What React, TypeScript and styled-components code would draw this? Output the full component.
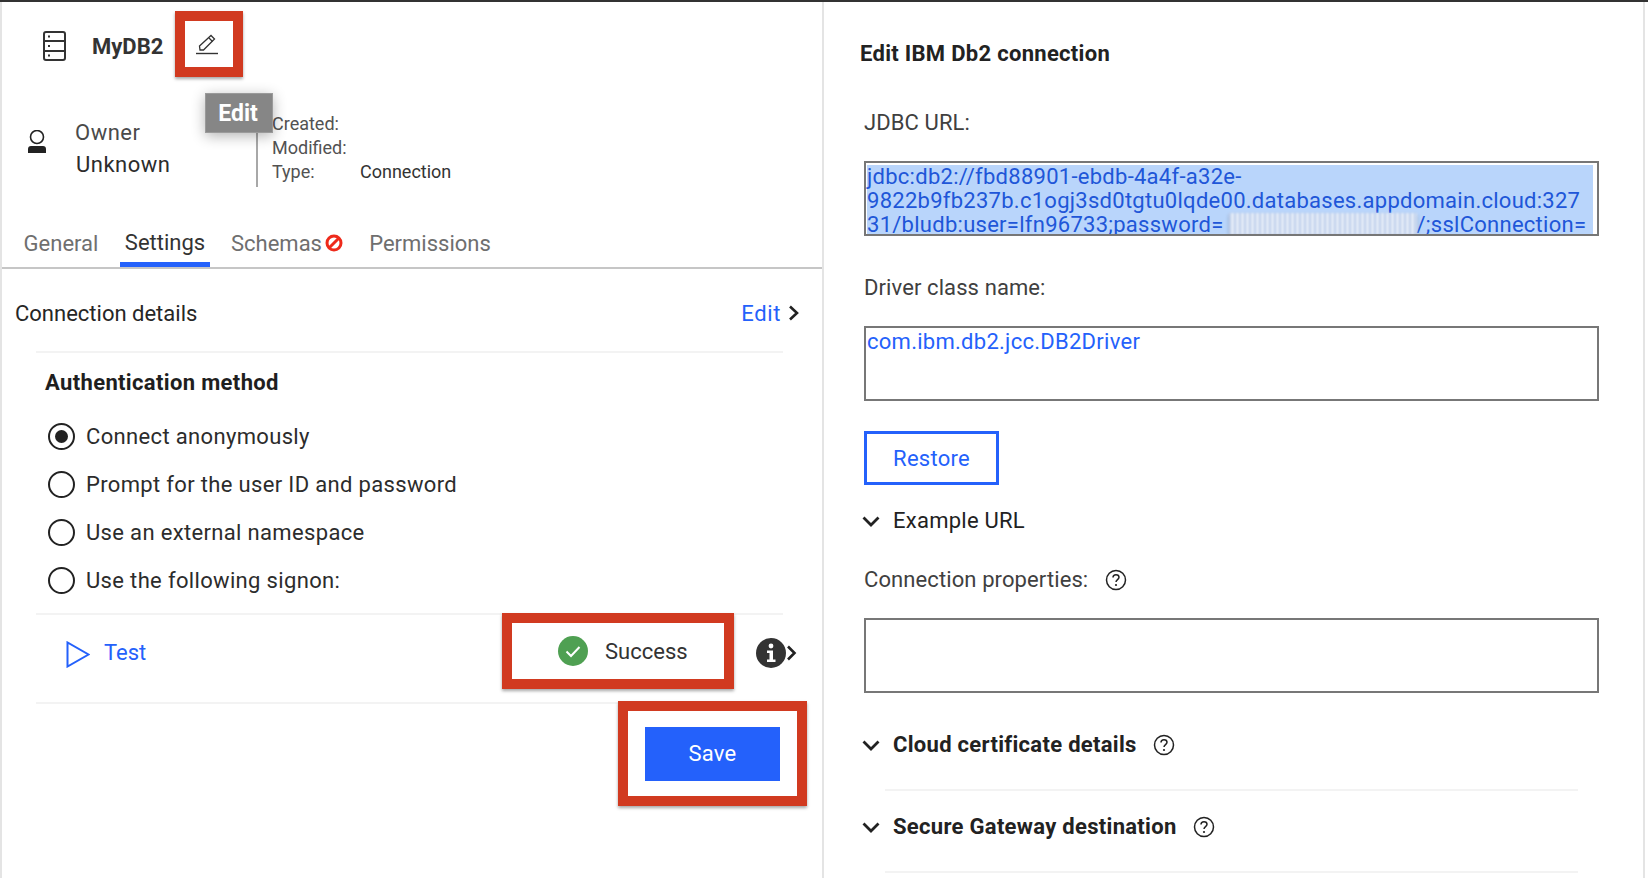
import styled, { createGlobalStyle } from 'styled-components';

const Global = createGlobalStyle`
    html, body { margin: 0; padding: 0; background: #fff; }
    body { font-family: Roboto, "Noto Sans", sans-serif; color: #262626; overflow: hidden; letter-spacing: 0.25px; }
`
const Page = styled.div`
    display: flex;
    width: 1648px;
    height: 878px;
    box-sizing: border-box;
    border-top: 2px solid #333;
    overflow: hidden;
`
const LeftPane = styled.div`
    width: 824px;
    box-sizing: border-box;
    border-left: 2px solid #e4e4e4;
    border-right: 2px solid #e4e4e4;
    display: flex;
    flex-direction: column;
    flex: none;
`
const RightPane = styled.div`
    width: 821px;
    flex: none;
    box-sizing: border-box;
    border-right: 2px solid #e4e4e4;
    padding: 0 0 0 36px;
`
const Header = styled.div`
    display: flex;
    align-items: center;
    height: 66px;
    margin-top: 9px;
    padding-left: 41px;
`
const DbIcon = styled.svg`
    width: 23px;
    height: 30px;
    margin: 4px 26px 0 0;
`
const Name = styled.div`
    font-size: 22px;
    font-weight: 700;
    letter-spacing: 0;
    color: #333;
    width: 83px;
    margin-top: 4px;
`
const RedFrame = styled.div<{ $w: number; $h: number }>`
    width: ${p => p.$w}px;
    height: ${p => p.$h}px;
    box-sizing: border-box;
    border: 10px solid #d13a20;
    box-shadow: 0 2px 3px rgba(0, 0, 0, 0.35);
    display: flex;
    align-items: center;
    justify-content: center;
    flex: none;
`
const SuccessFrame = styled(RedFrame)`
    justify-content: flex-start;
    padding-left: 46px;
    align-self: flex-start;
    margin-top: -2px;
`
const PencilIcon = styled.svg`
    margin: 2px 4px 0 0;
`
const Tooltip = styled.div`
    position: absolute;
    left: 205px;
    top: 93px;
    width: 68px;
    height: 40px;
    box-sizing: border-box;
    padding-right: 2px;
    background: #868686;
    border: 1px solid #9a9a9a;
    box-shadow: 0 3px 14px rgba(0, 0, 0, 0.3);
    color: #fff;
    font-size: 23px;
    font-weight: 700;
    letter-spacing: 0;
    display: flex;
    align-items: center;
    justify-content: center;
`
const Meta = styled.div`
    display: flex;
    height: 95px;
    margin-top: 17px;
    padding-left: 25px;
`
const OwnerIcon = styled.svg`
    width: 20px;
    height: 24px;
    margin-top: 36px;
`
const OwnerText = styled.div`
    margin-left: 28px;
    width: 181px;
    padding-top: 23px;
`
const OwnerLabel = styled.div`
    font-size: 22px;
    line-height: 32px;
    letter-spacing: 0.5px;
    color: #4a4a4a;
`
const OwnerValue = styled.div`
    font-size: 22px;
    line-height: 32px;
    letter-spacing: 0.5px;
    color: #2c2c2c;
    padding-left: 1px;
`
const MetaTable = styled.div`
    border-left: 2px solid #a8a8a8;
    height: 54px;
    margin-top: 39px;
    padding-left: 14px;
`
const MetaRows = styled.div`
    margin-top: -22px;
    display: grid;
    grid-template-columns: 88px auto;
    grid-auto-rows: 24px;
    font-size: 18px;
    letter-spacing: 0;
    align-items: center;
    color: #525252;
`
const MetaValue = styled.span`
    color: #333;
`
const Tabs = styled.div`
    display: flex;
    align-items: flex-end;
    height: 60px;
    border-bottom: 2px solid #c6c6c6;
    margin-top: 18px;
`
const Tab = styled.div<{ $active?: boolean; $w: number }>`
    width: ${p => p.$w}px;
    height: 46px;
    box-sizing: border-box;
    padding-top: ${p => (p.$active ? '1px' : '3px')};
    display: flex;
    align-items: center;
    justify-content: center;
    gap: 3px;
    font-size: 22px;
    letter-spacing: 0;
    color: ${p => (p.$active ? '#333' : '#6f6f6f')};
    border-bottom: 5px solid ${p => (p.$active ? '#2461fb' : 'transparent')};
`
const DetailsHead = styled.div`
    display: flex;
    align-items: center;
    justify-content: space-between;
    height: 82px;
    box-sizing: border-box;
    padding: 6px 22px 0 13px;
    font-size: 22px;
    letter-spacing: 0;
    color: #262626;
`
const EditLink = styled.div`
    display: flex;
    align-items: center;
    gap: 7px;
    color: #2461fb;
    font-size: 22px;
    letter-spacing: 0.6px;
`
const Rule = styled.div`
    height: 2px;
    background: #f3f3f3;
    margin: 0 39px 0 34px;
    flex: none;
`
const AuthTitle = styled.div`
    font-size: 22px;
    font-weight: 700;
    letter-spacing: 0.35px;
    color: #1f1f1f;
    padding-left: 43px;
    margin-top: 16px;
    line-height: 28px;
`
const RadioList = styled.div`
    display: flex;
    flex-direction: column;
    padding-left: 46px;
    margin: 15px 0 9px;
`
const RadioRow = styled.div`
    display: flex;
    align-items: center;
    height: 48px;
    gap: 11px;
    font-size: 22px;
    letter-spacing: 0.34px;
    color: #2c2c2c;
`
const Radio = styled.span<{ $on?: boolean }>`
    width: 27px;
    height: 27px;
    box-sizing: border-box;
    border-radius: 50%;
    border: 2px solid #222;
    display: flex;
    align-items: center;
    justify-content: center;
    &::after {
        content: '';
        display: ${p => (p.$on ? 'block' : 'none')};
        width: 13px;
        height: 13px;
        border-radius: 50%;
        background: #222;
    }
`
const TestRow = styled.div`
    display: flex;
    align-items: center;
    height: 87px;
    box-sizing: border-box;
    padding: 0 0 12px 64px;
`
const TestLink = styled.div`
    display: flex;
    align-items: center;
    gap: 14px;
    color: #2461fb;
    font-size: 22px;
    letter-spacing: 0;
    width: 436px;
    flex: none;
`
const PlayIcon = styled.svg`
    margin-top: 4px;
`
const SuccessText = styled.span`
    font-size: 22px;
    letter-spacing: 0;
    color: #333;
    margin-left: 17px;
`
const InfoGroup = styled.div`
    display: flex;
    align-items: center;
    margin-left: 22px;
`
const SaveRow = styled.div`
    display: flex;
    justify-content: flex-end;
    padding-right: 15px;
    margin-top: -3px;
`
const SaveButton = styled.div`
    width: 135px;
    height: 54px;
    background: #2461fb;
    color: #fff;
    font-size: 22px;
    display: flex;
    align-items: center;
    justify-content: center;
`
const PaneTitle = styled.div`
    font-size: 22px;
    font-weight: 700;
    letter-spacing: 0.3px;
    color: #222;
    margin-top: 38px;
    line-height: 28px;
`
const FieldLabel = styled.div<{ $top: number }>`
    font-size: 22px;
    letter-spacing: 0.1px;
    color: #404040;
    line-height: 28px;
    margin: ${p => p.$top}px 0 0 4px;
    display: flex;
    align-items: center;
    gap: 17px;
`
const TextBox = styled.div<{ $top: number }>`
    width: 735px;
    height: 75px;
    box-sizing: border-box;
    margin: ${p => p.$top}px 0 0 4px;
    border: 2px solid #777;
    padding: 2px 2px 0 1px;
    font-size: 22px;
    line-height: 24px;
    letter-spacing: 0.27px;
    color: #2461fb;
    overflow: hidden;
    white-space: pre;
`
const SelLine = styled.div`
    background: #b9d5fb;
    color: #2056d8;
    width: 726px;
    height: 24px;
`
const Blurred = styled.span`
    display: inline-block;
    vertical-align: top;
    width: 188px;
    height: 22px;
    margin-left: 5px;
    background: repeating-linear-gradient(90deg, #bccdea 0 2px, #e6edf8 2px 5px);
    box-shadow: 0 2px 3px rgba(0, 0, 0, 0.25);
    filter: blur(1px);
`
const RestoreButton = styled.div`
    width: 135px;
    height: 54px;
    box-sizing: border-box;
    margin: 30px 0 0 4px;
    border: 3px solid #2461fb;
    color: #2461fb;
    font-size: 22px;
    display: flex;
    align-items: center;
    justify-content: center;
`
const Section = styled.div<{ $top: number; $bold?: boolean }>`
    display: flex;
    align-items: center;
    margin: ${p => p.$top}px 0 0 2px;
    font-size: 22px;
    line-height: 28px;
    letter-spacing: ${p => (p.$bold ? '0.3px' : '0.25px')};
    font-weight: ${p => (p.$bold ? 700 : 400)};
    color: #222;
    gap: 16px;
`
const Chevron = styled.svg`
    width: 18px;
    height: 11px;
    margin-right: -3px;
    flex: none;
`
const SectionRule = styled.div<{ $top: number }>`
    height: 2px;
    background: #f3f3f3;
    width: 693px;
    margin: ${p => p.$top}px 0 0 25px;
`

const Help = () => (
    <svg width="22" height="22" viewBox="0 0 22 22" fill="none">
        <circle cx="11" cy="11" r="9.5" stroke="#222" strokeWidth="1.5" />
        <path d="M8 8.6c0-1.8 1.3-2.9 3-2.9s3 1.1 3 2.6c0 2.2-3 2.3-3 4.6" stroke="#222" strokeWidth="1.5" />
        <circle cx="11" cy="16" r="1.1" fill="#222" />
    </svg>
)

const Down = () => (
    <Chevron viewBox="0 0 18 11" fill="none">
        <path d="M1.5 1.5 9 9l7.5-7.5" stroke="#222" strokeWidth="2.8" />
    </Chevron>
)

const App = () => (
    <Page>
        <Global />
        <LeftPane>
            <Header>
                <DbIcon viewBox="0 0 23 30" fill="none">
                    <rect x="1" y="1" width="21" height="28" rx="2" stroke="#333" strokeWidth="2" />
                    <path d="M1 10h21M1 20h21" stroke="#333" strokeWidth="2" />
                    <path d="M5 5.5h2M5 15h2M5 24.5h2" stroke="#333" strokeWidth="2" />
                </DbIcon>
                <Name>MyDB2</Name>
                <RedFrame $w={68} $h={66}>
                    <PencilIcon width="24" height="22" viewBox="0 0 24 22" fill="none">
                        <path d="M5 16 4.5 12 16 1.5l3.5 3.5L8.5 16z" stroke="#333" strokeWidth="1.3" />
                        <path d="M14 4l3.5 3.5" stroke="#333" strokeWidth="1.3" />
                        <path d="M1 19.5h22" stroke="#333" strokeWidth="1.4" />
                    </PencilIcon>
                </RedFrame>
            </Header>
            <Tooltip>Edit</Tooltip>
            <Meta>
                <OwnerIcon viewBox="0 0 20 24" fill="none">
                    <circle cx="10" cy="7" r="6.5" stroke="#222" strokeWidth="1.6" />
                    <path d="M1 23v-4c0-2 1.2-3 3-3h12c1.8 0 3 1 3 3v4z" fill="#222" />
                </OwnerIcon>
                <OwnerText>
                    <OwnerLabel>Owner</OwnerLabel>
                    <OwnerValue>Unknown</OwnerValue>
                </OwnerText>
                <MetaTable>
                    <MetaRows>
                        <span>Created:</span><span />
                        <span>Modified:</span><span />
                        <span>Type:</span><MetaValue>Connection</MetaValue>
                    </MetaRows>
                </MetaTable>
            </Meta>
            <Tabs>
                <Tab $w={118}>General</Tab>
                <Tab $w={90} $active>Settings</Tab>
                <Tab $w={154}>
                    Schemas
                    <svg width="18" height="18" viewBox="0 0 18 18" fill="none">
                        <circle cx="9" cy="9" r="7" stroke="#ee2a1b" strokeWidth="3" />
                        <path d="M4.5 13.5l9-9" stroke="#ee2a1b" strokeWidth="3" />
                    </svg>
                </Tab>
                <Tab $w={132}>Permissions</Tab>
            </Tabs>
            <DetailsHead>
                Connection details
                <EditLink>
                    Edit
                    <svg width="12" height="16" viewBox="0 0 12 16" fill="none">
                        <path d="M2 1.5 9 8l-7 6.5" stroke="#222" strokeWidth="2.6" />
                    </svg>
                </EditLink>
            </DetailsHead>
            <Rule />
            <AuthTitle>Authentication method</AuthTitle>
            <RadioList>
                <RadioRow><Radio $on />Connect anonymously</RadioRow>
                <RadioRow><Radio />Prompt for the user ID and password</RadioRow>
                <RadioRow><Radio />Use an external namespace</RadioRow>
                <RadioRow><Radio />Use the following signon:</RadioRow>
            </RadioList>
            <Rule />
            <TestRow>
                <TestLink>
                    <PlayIcon width="24" height="27" viewBox="0 0 24 27" fill="none">
                        <path d="M1.5 1.5v24L22.5 13.5z" stroke="#2461fb" strokeWidth="2" />
                    </PlayIcon>
                    Test
                </TestLink>
                <SuccessFrame $w={232} $h={76}>
                    <svg width="30" height="30" viewBox="0 0 30 30" fill="none">
                        <circle cx="15" cy="15" r="15" fill="#4fa052" />
                        <path d="M8.5 15.5l4.5 4.5 8.5-9" stroke="#fff" strokeWidth="2" />
                    </svg>
                    <SuccessText>Success</SuccessText>
                </SuccessFrame>
                <InfoGroup>
                    <svg width="30" height="30" viewBox="0 0 30 30">
                        <circle cx="15" cy="15" r="15" fill="#333" />
                        <circle cx="15" cy="8" r="2.4" fill="#fff" />
                        <path d="M11 12.5h6v9h2.5v2.500h-8.500v-2.500h2.500v-6.500H11z" fill="#fff" />
                    </svg>
                    <svg width="11" height="16" viewBox="0 0 11 16" fill="none">
                        <path d="M2 1.5 8.5 8 2 14.500" stroke="#222" strokeWidth="2.6" />
                    </svg>
                </InfoGroup>
            </TestRow>
            <Rule />
            <SaveRow>
                <RedFrame $w={189} $h={105}>
                    <SaveButton>Save</SaveButton>
                </RedFrame>
            </SaveRow>
        </LeftPane>
        <RightPane>
            <PaneTitle>Edit IBM Db2 connection</PaneTitle>
            <FieldLabel $top={41}>JDBC URL:</FieldLabel>
            <TextBox $top={24}>
                <SelLine>jdbc:db2://fbd88901-ebdb-4a4f-a32e-</SelLine>
                <SelLine>9822b9fb237b.c1ogj3sd0tgtu0lqde00.databases.appdomain.cloud:327</SelLine>
                <SelLine>31/bludb:user=lfn96733;password=<Blurred />/;sslConnection=</SelLine>
            </TextBox>
            <FieldLabel $top={38}>Driver class name:</FieldLabel>
            <TextBox $top={24}>com.ibm.db2.jcc.DB2Driver</TextBox>
            <RestoreButton>Restore</RestoreButton>
            <Section $top={22}><Down />Example URL</Section>
            <FieldLabel $top={31}>Connection properties:<Help /></FieldLabel>
            <TextBox $top={24} />
            <Section $top={38} $bold><Down />Cloud certificate details<Help /></Section>
            <SectionRule $top={30} />
            <Section $top={22} $bold><Down />Secure Gateway destination<Help /></Section>
            <SectionRule $top={30} />
        </RightPane>
    </Page>
)
export default App;
